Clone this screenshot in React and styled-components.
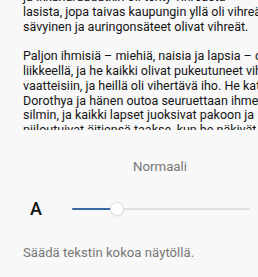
import React from "react";
import styled, { createGlobalStyle } from "styled-components";

const Global = createGlobalStyle`
  html, body {
    margin: 0;
    padding: 0;
    background: #f8f8f8;
    overflow: hidden;
  }
  body {
    font-family: Roboto, "Noto Sans", sans-serif;
    -webkit-font-smoothing: antialiased;
  }
`;

const Screen = styled.div`
  width: 320px;
  display: flex;
  flex-direction: column;
  background: #f8f8f8;
`;

const TextViewport = styled.div`
  height: 130px;
  overflow: hidden;
  padding: 0 23px;
`;

const ScrollContent = styled.div`
  margin-top: -10px;
`;

const Paragraph = styled.div`
  font-size: 12.5px;
  line-height: 14.8px;
  color: #141414;
  margin-bottom: 14.8px;
`;

const Line = styled.div`
  white-space: nowrap;
`;

const SizeLabel = styled.div`
  margin-top: 29px;
  text-align: center;
  font-size: 13.3px;
  line-height: 16px;
  color: #777777;
`;

const SliderRow = styled.div`
  margin-top: 19px;
  height: 30px;
  display: flex;
  align-items: center;
  padding: 0 30px;
`;

const Glyph = styled.span`
  font-size: ${(p) => (p.$large ? "24px" : "18px")};
  line-height: ${(p) => (p.$large ? "24px" : "18px")};
  font-weight: 500;
  color: #111111;
`;

const Track = styled.div`
  position: relative;
  flex: 1;
  height: 2px;
  margin: 0 24px 0 30px;
  background: #dedede;
  border-radius: 1px;
`;

const Fill = styled.div`
  position: absolute;
  left: 0;
  top: 0;
  height: 2px;
  width: ${(p) => p.$pct}%;
  background: #3b6aa3;
  border-radius: 1px;
`;

const Thumb = styled.div`
  position: absolute;
  top: 50%;
  left: ${(p) => p.$pct}%;
  width: 12px;
  height: 12px;
  margin: -6px 0 0 -6px;
  border-radius: 50%;
  background: #ffffff;
  box-shadow: 0 0 0 1px #e2e2e2, 0 1px 2px rgba(0, 0, 0, 0.18);
`;

const Hint = styled.div`
  margin-top: 21px;
  padding: 0 23px;
  font-size: 13.2px;
  line-height: 16px;
  color: #777777;
`;

const paragraphs = [
  [
    "ja ikkunaruudutkin oli tehty vihreästä",
    "lasista, jopa taivas kaupungin yllä oli vihreän",
    "sävyinen ja auringonsäteet olivat vihreät.",
  ],
  [
    "Paljon ihmisiä – miehiä, naisia ja lapsia – oli",
    "liikkeellä, ja he kaikki olivat pukeutuneet vihreisiin",
    "vaatteisiin, ja heillä oli vihertävä iho. He katsoivat",
    "Dorothya ja hänen outoa seuruettaan ihmetellen",
    "silmin, ja kaikki lapset juoksivat pakoon ja",
    "piiloutuivat äitiensä taakse, kun he näkivät",
  ],
];

export default function App() {
  const pct = 25.3;
  return (
    <Screen>
      <Global />
      <TextViewport>
        <ScrollContent>
          {paragraphs.map((lines, i) => (
            <Paragraph key={i}>
              {lines.map((l, j) => (
                <Line key={j}>{l}</Line>
              ))}
            </Paragraph>
          ))}
        </ScrollContent>
      </TextViewport>
      <SizeLabel>Normaali</SizeLabel>
      <SliderRow>
        <Glyph>A</Glyph>
        <Track>
          <Fill $pct={pct} />
          <Thumb $pct={pct} />
        </Track>
        <Glyph $large>A</Glyph>
      </SliderRow>
      <Hint>Säädä tekstin kokoa näytöllä.</Hint>
    </Screen>
  );
}
